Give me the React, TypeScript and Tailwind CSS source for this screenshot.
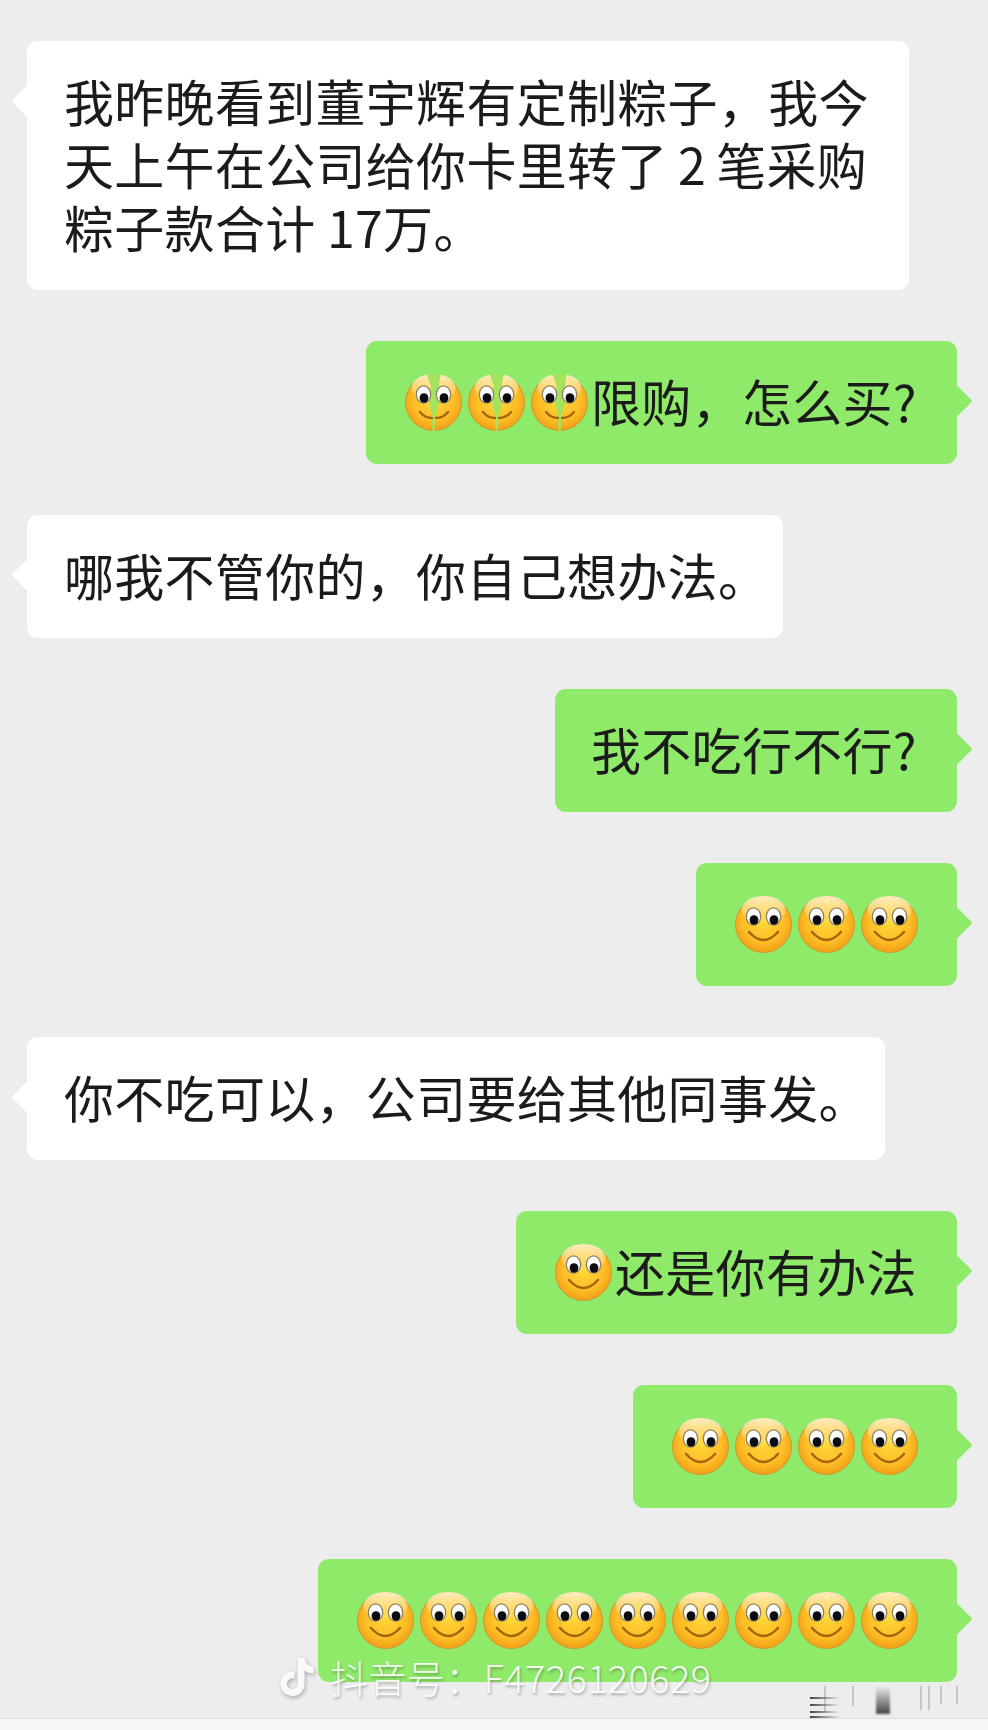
import { FaTiktok } from 'react-icons/fa6';
import type { ReactNode } from 'react';

function Smile({ cracked = false, id }: { cracked?: boolean; id: string }) {
  return (
    <svg viewBox="0 0 57 57" className="mx-[3px] h-[57px] w-[57px] shrink-0">
      <defs>
        <radialGradient id={`face-${id}`} cx="50%" cy="45%" r="62%">
          <stop offset="0%" stopColor="#ffd93a" />
          <stop offset="60%" stopColor="#fdbd26" />
          <stop offset="100%" stopColor="#ed9412" />
        </radialGradient>
        <linearGradient id={`shine-${id}`} x1="0" y1="0" x2="0" y2="1">
          <stop offset="0%" stopColor="#fff6d2" stopOpacity="0.9" />
          <stop offset="100%" stopColor="#fff6d2" stopOpacity="0" />
        </linearGradient>
      </defs>
      <circle cx="28.5" cy="28.5" r="28" fill={`url(#face-${id})`} stroke="#d3962a" strokeWidth="1" />
      <ellipse cx="28.5" cy="14" rx="22" ry="14" fill={`url(#shine-${id})`} />
      {cracked && (
        <path d="M21 -1 L36 -1 L34 10 L36 22 L31 40 L29.5 58 L27.5 58 L27 42 L23 24 L26 12 Z" fill="#a4e35e" />
      )}
      <ellipse cx="18.5" cy="20.5" rx="7.2" ry="8.6" fill="#fff" stroke="#8f8160" strokeWidth="1.3" />
      <ellipse cx="38.5" cy="20.5" rx="7.2" ry="8.6" fill="#fff" stroke="#8f8160" strokeWidth="1.3" />
      <ellipse cx="19" cy="24" rx="4.4" ry="4.8" fill="#0b0b12" />
      <ellipse cx="39" cy="24" rx="4.4" ry="4.8" fill="#0b0b12" />
      {cracked ? (
        <>
          <path d="M15 38 Q20 44 27 44" fill="none" stroke="#a5650f" strokeWidth="2.4" strokeLinecap="round" />
          <path d="M31 44 Q38 44 43 38" fill="none" stroke="#a5650f" strokeWidth="2.4" strokeLinecap="round" />
        </>
      ) : (
        <path d="M14 36 Q28.5 52 43 36" fill="none" stroke="#a5650f" strokeWidth="2.6" strokeLinecap="round" />
      )}
    </svg>
  );
}

function Bubble({ mine = false, className = '', children }: { mine?: boolean; className?: string; children: ReactNode }) {
  return (
    <div
      className={`relative rounded-[11px] py-[30px] ${mine ? 'self-end bg-[#90ea6a]' : 'self-start bg-white'} ${className}`}
    >
      <span
        className={`absolute top-[49px] h-[22px] w-[22px] rotate-45 rounded-[2px] ${
          mine ? '-right-[11px] bg-[#90ea6a]' : '-left-[11px] bg-white'
        }`}
      />
      <div className="relative -top-[2px]">{children}</div>
    </div>
  );
}

function Smiles({ n, tag, cracked }: { n: number; tag: string; cracked?: boolean }) {
  return (
    <>
      {Array.from({ length: n }, (_, i) => (
        <Smile key={i} id={`${tag}-${i}`} cracked={cracked} />
      ))}
    </>
  );
}

const ROWS = [13, 20, 27, 32];
const TICKS = [
  { left: 14, h: 26 },
  { left: 42, h: 20 },
  { left: 110, h: 24 },
  { left: 118, h: 24 },
  { left: 130, h: 18 },
  { left: 146, h: 18 },
];

export default function App() {
  return (
    <div className="relative h-[1730px] w-[988px] overflow-hidden bg-[#ededed] font-['Noto_Sans_CJK_SC','Liberation_Sans',sans-serif] text-[50px] leading-[63px] tracking-[0.3px] text-[#1b1b1b]">
      <div className="flex flex-col gap-[51px] pl-[27px] pr-[31px] pt-[41px]">
        <Bubble className="w-[882px] pl-[37px] pr-[25px]">
          {'我昨晚看到董宇辉有定制粽子\uFF0C我今天上午在公司给你卡里转了\u20092\u2009笔采购粽子款合计 17万。'}
        </Bubble>

        <Bubble mine className="w-[591px] px-[36px]">
          <div className="flex h-[63px] items-center whitespace-nowrap">
            <span className="relative top-[2px] flex">
              <Smiles n={3} tag="a" cracked />
            </span>
            <span>{'限购\uFF0C怎么买?'}</span>
          </div>
        </Bubble>

        <Bubble className="w-[756px] whitespace-nowrap pl-[37px]">{'哪我不管你的\uFF0C你自己想办法。'}</Bubble>

        <Bubble mine className="w-[402px] whitespace-nowrap px-[36px]">我不吃行不行?</Bubble>

        <Bubble mine className="px-[36px]">
          <div className="relative top-[2px] flex h-[63px] items-center">
            <Smiles n={3} tag="b" />
          </div>
        </Bubble>

        <Bubble className="w-[858px] whitespace-nowrap pl-[37px]">{'你不吃可以\uFF0C公司要给其他同事发。'}</Bubble>

        <Bubble mine className="w-[441px] px-[36px]">
          <div className="flex h-[63px] items-center whitespace-nowrap">
            <span className="relative top-[2px] flex">
              <Smiles n={1} tag="c" />
            </span>
            <span>还是你有办法</span>
          </div>
        </Bubble>

        <Bubble mine className="px-[36px]">
          <div className="relative top-[2px] flex h-[63px] items-center">
            <Smiles n={4} tag="d" />
          </div>
        </Bubble>

        <Bubble mine className="px-[36px]">
          <div className="relative top-[2px] flex h-[63px] items-center">
            <Smiles n={9} tag="e" />
          </div>
        </Bubble>
      </div>

      {/* douyin watermark */}
      <div className="absolute left-[278px] top-[1654px] flex items-center gap-[14px] text-[38px] font-light leading-[46px] tracking-[0.4px] text-white/90 [text-shadow:1px_2px_3px_rgba(0,0,0,0.3)]">
        <FaTiktok size={38} className="drop-shadow-[1px_2px_2px_rgba(0,0,0,0.3)]" />
        <span className="whitespace-nowrap">{'抖音号\uFF1AF4726120629'}</span>
      </div>

      {/* smudged leftover under the last bubble */}
      <div className="absolute left-[810px] top-[1684px] h-[30px] w-[150px]">
        {ROWS.map((top) => (
          <span
            key={top}
            className="absolute left-0 h-[2px] w-[30px] bg-gradient-to-r from-[#444] to-transparent"
            style={{ top }}
          />
        ))}
        {TICKS.map((t) => (
          <span
            key={t.left}
            className="absolute top-[2px] w-[2px] bg-[#555]/25 blur-[0.5px]"
            style={{ left: t.left, height: t.h }}
          />
        ))}
        <span className="absolute left-[66px] top-[2px] h-[28px] w-[14px] bg-gradient-to-b from-transparent to-[#444] blur-[1px]" />
      </div>

      <div className="absolute bottom-0 left-0 h-[12px] w-full border-t border-[#dcdcdc] bg-[#f6f6f6]" />
    </div>
  );
}
